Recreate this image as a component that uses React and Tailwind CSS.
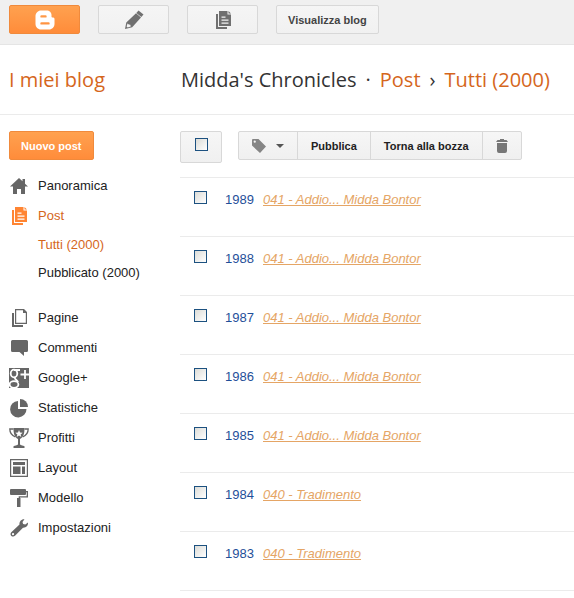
// src/pages/PostList.jsx
import React from "react";

const posts = [
  { id: 1989, title: "041 - Addio... Midda Bontor" },
  { id: 1988, title: "041 - Addio... Midda Bontor" },
  { id: 1987, title: "041 - Addio... Midda Bontor" },
  { id: 1986, title: "041 - Addio... Midda Bontor" },
  { id: 1985, title: "041 - Addio... Midda Bontor" },
  { id: 1984, title: "040 - Tradimento" },
  { id: 1983, title: "040 - Tradimento" },
];

const Icon = ({ children }) => (
  <svg viewBox="0 0 20 20" className="w-5 h-5 shrink-0" fill="currentColor" aria-hidden="true">
    {children}
  </svg>
);

const HomeIcon = () => (
  <Icon>
    <path d="M10 2 1 10.500h3V18h4v-5h4v5h4v-7.500h3L16 7.700V3h-2.500v2.300z" />
  </Icon>
);

const PostsIcon = () => (
  <Icon>
    <path d="M3 4h2v13h9v2H3z" />
    <path fillRule="evenodd" d="M6 1h8.500v3.500H18V16H6zM8.500 6.500v1.200h4V6.500zM8.500 9.500v1.200h7V9.500zM8.500 12.500v1.200h7v-1.200z" />
    <path d="M15.500 1 18 3.500h-2.500z" />
  </Icon>
);

const PagesIcon = () => (
  <Icon>
    <path d="M3 5h2v12h9v2H3z" />
    <path fillRule="evenodd" d="M6 1h9l3 3v12H6zM7.200 2.200v12.600h9.600V5H14V2.200z" />
  </Icon>
);

const CommentIcon = () => (
  <Icon>
    <path d="M3.500 2h14Q19 2 19 3.500v9q0 1.500-1.500 1.500H15v4l-4.500-4h-7Q2 14 2 12.500v-9Q2 2 3.500 2z" />
  </Icon>
);

const GooglePlusIcon = () => (
  <Icon>
    <path d="M0 0h20v20H0z" />
    <g fill="none" stroke="#fff" strokeWidth="1.800">
      <ellipse cx="5" cy="5.500" rx="3.300" ry="3.900" />
      <ellipse cx="5" cy="16.500" rx="4.400" ry="3.300" />
      <path d="M5 2h6M6.500 9.200c-2 1.800 1.500 2.300 2.600 5" />
      <path d="M16 2v9M11.500 6.500H20" />
    </g>
  </Icon>
);

const StatsIcon = () => (
  <Icon>
    <path d="M9 3v8h8.500A8.200 8.200 0 1 1 9 3z" />
    <path d="M11 1a8 8 0 0 1 8 8h-8z" />
  </Icon>
);

const TrophyIcon = () => (
  <Icon>
    <path d="M4.500 0h11c0 6-1 9-4.500 11v5.500c1 1 3 1 4.500 1.700V20h-11v-1.800c1.500-.7 3.500-.7 4.500-1.700V11C5.500 9 4.500 6 4.500 0z" />
    <path d="M4.500 1H.8c0 4 2 6.500 5.500 8M15.500 1h3.700c0 4-2 6.500-5.500 8" fill="none" stroke="currentColor" strokeWidth="1.300" />
    <path d="m10 2 1 2.500 2.700.2-2.100 1.700.7 2.600L10 7.600 7.700 9l.7-2.600-2.100-1.700 2.700-.2z" fill="#fff" />
  </Icon>
);

const LayoutIcon = () => (
  <Icon>
    <path fillRule="evenodd" d="M1 1h18v18H1zM2.200 2.200v15.600h15.600V2.200z" />
    <path d="M4 4h12v3H4zM4 8.500h7.500V16H4zM13 8.500h3V16h-3z" />
  </Icon>
);

const TemplateIcon = () => (
  <Icon>
    <path d="M2 1h14q1 0 1 1v1h2v6.500h-8V11h-1.300V8.300h8V4.300H17V6q0 1-1 1H2Q1 7 1 6V2q0-1 1-1z" />
    <path d="M8 10h3.500v9H8z" />
  </Icon>
);

const WrenchIcon = () => (
  <Icon>
    <path fillRule="evenodd" d="M15.500 1.200 13.500 4l.6 2 2.200.6L19 4.500c.3 3-2 5.500-5 5.200L6 17.700C3.500 20 0 16.800 2.300 14.200l8.200-7.700c-.4-3 2-5.700 5-5.300zM4 15a1.100 1.100 0 1 0 .1 2.200A1.100 1.100 0 0 0 4 15z" />
  </Icon>
);

const PencilIcon = () => (
  <Icon>
    <path d="m14.500.500 5 4-2.200 2.600-5-4.200z" />
    <path fillRule="evenodd" d="m12 3.200 5 4.200-8.800 9.800L1 19l1.300-6.500zM3.500 13.400l-.9 3.200 1 .9 3.200-.9-.5-1.800-1.500-.2z" />
  </Icon>
);

const BloggerIcon = () => (
  <Icon>
    <path
      fillRule="evenodd"
      d="M6 .5h5.500c3 0 5 2 5 4.500v1.500c0 .8.500 1 1.300 1 1 0 1.700.5 1.700 1.500v5c0 3-2.500 5.500-5.500 5.500H6C3 19.500.5 17 .5 14V6C.5 3 3 .5 6 .5zM6.500 5.200a1.200 1.200 0 0 0 0 2.400h4a1.200 1.200 0 0 0 0-2.400zM6.500 12.200a1.200 1.200 0 0 0 0 2.400h7a1.200 1.200 0 0 0 0-2.400z"
    />
  </Icon>
);

const TagIcon = () => (
  <svg viewBox="0 0 14 14" className="w-3.5 h-3.5" fill="currentColor" aria-hidden="true">
    <path fillRule="evenodd" d="M0 1q0-1 1-1h5.500L14 7.500 8 14 0 6.500zM2.700 1.500a1.100 1.100 0 1 0 .1 2.200 1.100 1.100 0 0 0-.1-2.200z" />
  </svg>
);

const TrashIcon = () => (
  <svg viewBox="0 0 12 14" className="w-3 h-3.5" fill="currentColor" aria-hidden="true">
    <path d="M4 1V0h4v1h2.500l1.500 2H0l1.500-2zM1 4h10v8q0 2-2 2H3q-2 0-2-2z" />
  </svg>
);

const menu = [
  { label: "Pagine", icon: PagesIcon },
  { label: "Commenti", icon: CommentIcon },
  { label: "Google+", icon: GooglePlusIcon },
  { label: "Statistiche", icon: StatsIcon },
  { label: "Profitti", icon: TrophyIcon },
  { label: "Layout", icon: LayoutIcon },
  { label: "Modello", icon: TemplateIcon },
  { label: "Impostazioni", icon: WrenchIcon },
];

const NavItem = ({ label, icon: ItemIcon }) => (
  <li>
    <a href="#" className="flex items-center gap-[9px] h-[30px]">
      <span className="text-[#666]">
        <ItemIcon />
      </span>
      {label}
    </a>
  </li>
);

const Checkbox = ({ label }) => (
  <input
    type="checkbox"
    aria-label={label}
    className="block appearance-none w-[13px] h-[13px] border border-[#1c5180] bg-gradient-to-br from-[#dcdcd7] to-white checked:from-[#1c5180]"
  />
);

const App = () => {
  return (
    <div className="min-h-screen bg-white text-[13px] leading-5 text-[#222] font-['Liberation_Sans',Arial,sans-serif]">
      {/* Top bar */}
      <div className="flex items-start gap-[18px] h-[45px] pt-[5px] px-[9px] bg-[#f0f0f0] border-b border-[#e5e5e5]">
        <button
          aria-label="Blogger"
          className="flex items-center justify-center w-[71px] h-[29px] rounded-xs border border-[#f08a3c] bg-gradient-to-b from-[#ffa14f] to-[#ff8c3a] text-white"
        >
          <BloggerIcon />
        </button>
        <button
          aria-label="Nuovo post"
          className="flex items-center justify-center w-[71px] h-[29px] rounded-xs border border-[#d8d8d8] bg-gradient-to-b from-[#f5f5f5] to-[#f1f1f1] text-[#707070]"
        >
          <PencilIcon />
        </button>
        <button
          aria-label="Elenco post"
          className="flex items-center justify-center w-[71px] h-[29px] rounded-xs border border-[#d8d8d8] bg-gradient-to-b from-[#f5f5f5] to-[#f1f1f1] text-[#707070]"
        >
          <PostsIcon />
        </button>
        <button className="h-[29px] px-[11px] rounded-xs border border-[#d8d8d8] bg-gradient-to-b from-[#f5f5f5] to-[#f1f1f1] text-[11px] font-bold text-[#444]">
          Visualizza blog
        </button>
      </div>

      {/* Header */}
      <header className="flex items-center h-[70px] pl-[9px] border-b border-[#ebebeb] font-['Open_Sans',sans-serif] text-[20px] leading-7 whitespace-nowrap">
        <a href="#" className="w-[172px] shrink-0 text-[#d5661c]">
          I miei blog
        </a>
        <h1 className="flex gap-[9px] text-[#333]">
          <span>Midda's Chronicles</span>
          <span>·</span>
          <a href="#" className="text-[#d5661c]">
            Post
          </a>
          <span>›</span>
          <a href="#" className="text-[#d5661c]">
            Tutti (2000)
          </a>
        </h1>
      </header>

      <div className="flex pt-4">
        {/* Sidebar */}
        <nav className="w-[180px] shrink-0 pl-[9px]">
          <button className="h-[29px] px-[11px] mb-[11px] rounded-xs border border-[#f08a3c] bg-gradient-to-b from-[#ffa14f] to-[#ff8c3a] text-[11px] font-bold text-white">
            Nuovo post
          </button>
          <ul>
            <NavItem label="Panoramica" icon={HomeIcon} />
            <li className="pb-4">
              <a href="#" className="flex items-center gap-[9px] h-[30px] text-[#d5661c]">
                <span className="text-[#ff8533]">
                  <PostsIcon />
                </span>
                Post
              </a>
              <ul className="pl-[29px] leading-7">
                <li>
                  <a href="#" className="text-[#d5661c]">
                    Tutti (2000)
                  </a>
                </li>
                <li>
                  <a href="#">Pubblicato (2000)</a>
                </li>
              </ul>
            </li>
            {menu.map((item) => (
              <NavItem key={item.label} {...item} />
            ))}
          </ul>
        </nav>

        {/* Posts */}
        <main className="flex-1">
          <div className="flex items-start gap-4 h-[46px]">
            <label className="flex justify-center w-[42px] h-8 pt-[6px] rounded-xs border border-[#d8d8d8] bg-gradient-to-b from-[#f6f6f6] to-[#f0f0f0]">
              <Checkbox label="Seleziona tutti" />
            </label>
            <div className="flex h-[29px] rounded-xs border border-[#d8d8d8] divide-x divide-[#d8d8d8] bg-gradient-to-b from-[#f6f6f6] to-[#f0f0f0] text-[11px] font-bold whitespace-nowrap">
              <button aria-label="Etichette" className="flex items-center gap-[10px] px-[13px] text-[#858585]">
                <TagIcon />
                <svg viewBox="0 0 8 4" className="w-2 h-1" fill="#555" aria-hidden="true">
                  <path d="M0 0h8L4 4z" />
                </svg>
              </button>
              <button className="px-[13px]">Pubblica</button>
              <button className="px-[13px]">Torna alla bozza</button>
              <button aria-label="Elimina" className="flex items-center px-[13px] text-[#777]">
                <TrashIcon />
              </button>
            </div>
          </div>

          <table className="w-full border-b border-[#ebebeb]">
            <tbody>
              {posts.map((post) => (
                <tr key={post.id} className="h-[59px] align-top border-t border-[#ebebeb]">
                  <td className="w-[45px] pt-[13px] pl-[14px]">
                    <Checkbox label={`Seleziona ${post.id}`} />
                  </td>
                  <td className="w-[38px] pt-3 text-[#1f4f99]">{post.id}</td>
                  <td className="pt-3">
                    <a href="#" className="italic underline text-[#e5a565]">
                      {post.title}
                    </a>
                  </td>
                </tr>
              ))}
            </tbody>
          </table>
        </main>
      </div>
    </div>
  );
};

export default App;
